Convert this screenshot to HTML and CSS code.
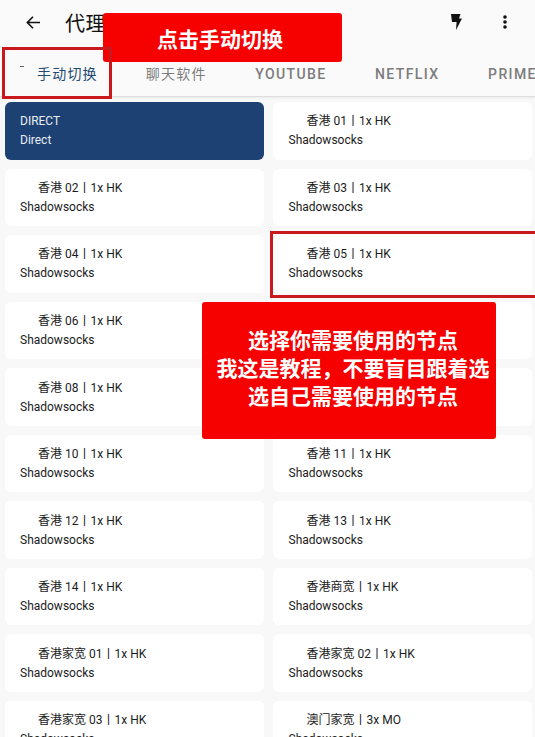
FILE: index.html
```html
<!DOCTYPE html>
<html lang="zh-CN">
<head>
    <meta charset="UTF-8" />
    <meta name="viewport" content="width=device-width, initial-scale=1" />
    <title>代理</title>
    <link rel="stylesheet" href="styles.css">
</head>
<body>
    <div class="app">
        <header class="header">
            <div class="toolbar">
                <svg class="back" width="14" height="13" viewBox="0 0 14 13"><path d="M7 .8 1.300 6.500 7 12.200M1.300 6.500H14" fill="none" stroke="#111" stroke-width="1.600"/></svg>
                <h1 class="title">代理</h1>
                <svg class="bolt" width="11" height="16" viewBox="0 0 11 16"><path d="M0 0h9.500L8 4.500h3L5 16l.6-8H1z" fill="#111"/></svg>
                <svg class="more" width="4" height="14" viewBox="0 0 4 14"><circle cx="2" cy="2" r="1.800"/><circle cx="2" cy="7" r="1.800"/><circle cx="2" cy="12" r="1.800"/></svg>
            </div>
            <nav class="tabs">
                <div class="tab active"><span class="tab-mark"></span>手动切换</div>
                <div class="tab">聊天软件</div>
                <div class="tab latin">YOUTUBE</div>
                <div class="tab latin">NETFLIX</div>
                <div class="tab latin">PRIME</div>
            </nav>
        </header>

        <main class="grid">
            <div class="card selected"><div>DIRECT</div><div>Direct</div></div>
            <div class="card"><div class="name">香港 01丨1x HK</div><div>Shadowsocks</div></div>
            <div class="card"><div class="name">香港 02丨1x HK</div><div>Shadowsocks</div></div>
            <div class="card"><div class="name">香港 03丨1x HK</div><div>Shadowsocks</div></div>
            <div class="card"><div class="name">香港 04丨1x HK</div><div>Shadowsocks</div></div>
            <div class="card"><div class="name">香港 05丨1x HK</div><div>Shadowsocks</div></div>
            <div class="card"><div class="name">香港 06丨1x HK</div><div>Shadowsocks</div></div>
            <div class="card"><div class="name">香港 07丨1x HK</div><div>Shadowsocks</div></div>
            <div class="card"><div class="name">香港 08丨1x HK</div><div>Shadowsocks</div></div>
            <div class="card"><div class="name">香港 09丨1x HK</div><div>Shadowsocks</div></div>
            <div class="card"><div class="name">香港 10丨1x HK</div><div>Shadowsocks</div></div>
            <div class="card"><div class="name">香港 11丨1x HK</div><div>Shadowsocks</div></div>
            <div class="card"><div class="name">香港 12丨1x HK</div><div>Shadowsocks</div></div>
            <div class="card"><div class="name">香港 13丨1x HK</div><div>Shadowsocks</div></div>
            <div class="card"><div class="name">香港 14丨1x HK</div><div>Shadowsocks</div></div>
            <div class="card"><div class="name">香港商宽丨1x HK</div><div>Shadowsocks</div></div>
            <div class="card"><div class="name">香港家宽 01丨1x HK</div><div>Shadowsocks</div></div>
            <div class="card"><div class="name">香港家宽 02丨1x HK</div><div>Shadowsocks</div></div>
            <div class="card"><div class="name">香港家宽 03丨1x HK</div><div>Shadowsocks</div></div>
            <div class="card"><div class="name">澳门家宽丨3x MO</div><div>Shadowsocks</div></div>
        </main>

        <div class="callout callout-tab">点击手动切换</div>
        <div class="callout callout-node">选择你需要使用的节点<br>我这是教程，不要盲目跟着选<br>选自己需要使用的节点</div>
        <div class="outline outline-tab"></div>
        <div class="outline outline-card"></div>
    </div>
</body>
</html>
```

FILE: styles.css
```css
* {
    box-sizing: border-box;
}
html, body {
    margin: 0;
    padding: 0;
}
body {
    font-family: Roboto, "Noto Sans CJK SC", sans-serif;
    background-color: #f8f8f8;
}
.app {
    position: relative;
    width: 535px;
    height: 737px;
    overflow: hidden;
}
.header {
    height: 97px;
    background-color: #fafafa;
    border-bottom: 1px solid #dedede;
    box-shadow: 0 1px 2px rgba(0,0,0,0.06);
}
.toolbar {
    display: flex;
    align-items: center;
    height: 44px;
    padding-left: 26px;
    padding-right: 28px;
}
.title {
    margin: 0 0 0 25px;
    font-size: 20px;
    font-weight: 400;
    letter-spacing: 0.5px;
    color: #111;
    flex: 1;
}
.bolt {
    margin-right: 41px;
}
.more {
    fill: #111;
}
.tabs {
    display: flex;
    height: 52px;
    padding-top: 20px;
    padding-left: 37px;
    gap: 48px;
    white-space: nowrap;
}
.tab {
    position: relative;
    font-size: 14px;
    line-height: 20px;
    font-weight: 400;
    letter-spacing: 1.200px;
    color: #7c7c7c;
}
.tab.latin {
    margin-left: 0.500px;
    font-weight: 500;
    letter-spacing: 1.400px;
}
.tab.active {
    color: #1f4a72;
}
.tab-mark {
    position: absolute;
    left: -17px;
    top: 2px;
    width: 4px;
    height: 1px;
    background-color: #666;
}
.grid {
    display: grid;
    grid-template-columns: 259px 259px;
    grid-auto-rows: 57.550px;
    column-gap: 9px;
    row-gap: 9px;
    padding: 5px 0 0 5px;
}
.card {
    padding: 10.400px 15px;
    background-color: #fff;
    border-radius: 6px;
    font-size: 12px;
    line-height: 19px;
    color: #1c1c1c;
}
.card:nth-child(even) {
    padding-left: 15.500px;
}
.card.selected {
    background-color: #1c4172;
    color: #e8edf3;
}
.name {
    padding-left: 18px;
}
.callout {
    position: absolute;
    display: flex;
    align-items: center;
    justify-content: center;
    text-align: center;
    background-color: #f60000;
    border-radius: 3px;
    color: #fff;
    font-weight: 700;
    font-family: "Noto Sans CJK SC", sans-serif;
}
.callout-tab {
    left: 103px;
    top: 13px;
    width: 239px;
    height: 49px;
    padding-right: 5px;
    font-size: 21px;
}
.callout-node {
    left: 202px;
    top: 302px;
    width: 294px;
    height: 137px;
    padding-left: 8px;
    padding-bottom: 8px;
    font-size: 21px;
    line-height: 28px;
}
.outline {
    position: absolute;
    border: 3px solid #c9191c;
}
.outline-tab {
    left: 2px;
    top: 47px;
    width: 110px;
    height: 52px;
}
.outline-card {
    left: 270px;
    top: 231px;
    width: 270px;
    height: 67px;
}
```
